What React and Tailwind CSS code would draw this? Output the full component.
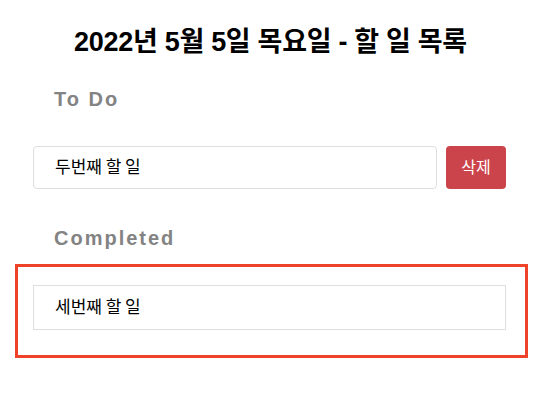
import React from "react";

const todos = [{ id: 2, text: "두번째 할 일" }];
const completed = [{ id: 3, text: "세번째 할 일" }];

const font = "font-['Liberation_Sans','Noto_Sans_CJK_KR',sans-serif]";

export default function App() {
    return (
        <main className={`min-h-screen bg-white text-black ${font}`}>
            <h1 className="pt-[26px] text-center text-[27px] font-bold leading-8 tracking-[-0.3px]">
                2022년 5월 5일 목요일 - 할 일 목록
            </h1>

            {/* To Do */}
            <section className="pl-[33px] pr-[35px]">
                <h2 className="mt-[27px] pl-[21px] text-[20px] font-bold leading-7 tracking-[2px] text-[#838383]">
                    To Do
                </h2>
                <ul className="mt-[33px] space-y-2">
                    {todos.map((todo) => (
                        <li key={todo.id} className="flex gap-[9px]">
                            <div className="flex h-[43px] flex-1 items-center rounded-[4px] border border-[#dedede] pl-[21px] text-[17px] [word-spacing:-1px]">
                                {todo.text}
                            </div>
                            <button className="h-[43px] w-[60px] rounded-[4px] bg-[#cc444b] text-[16px] text-white">
                                삭제
                            </button>
                        </li>
                    ))}
                </ul>
            </section>

            {/* Completed */}
            <section>
                <h2 className="mt-[35px] pl-[54px] text-[20px] font-bold leading-7 tracking-[2px] text-[#838383]">
                    Completed
                </h2>
                <div className="ml-[15px] mt-[12px] w-[513px] border-[3px] border-[#ee4229] pb-[25px] pl-[15px] pr-[19px] pt-[18px]">
                    {completed.map((todo) => (
                        <div
                            key={todo.id}
                            className="flex h-[45px] items-center border border-[#dedede] pl-[21px] text-[17px] [word-spacing:-1px]"
                        >
                            {todo.text}
                        </div>
                    ))}
                </div>
            </section>
        </main>
    );
}
